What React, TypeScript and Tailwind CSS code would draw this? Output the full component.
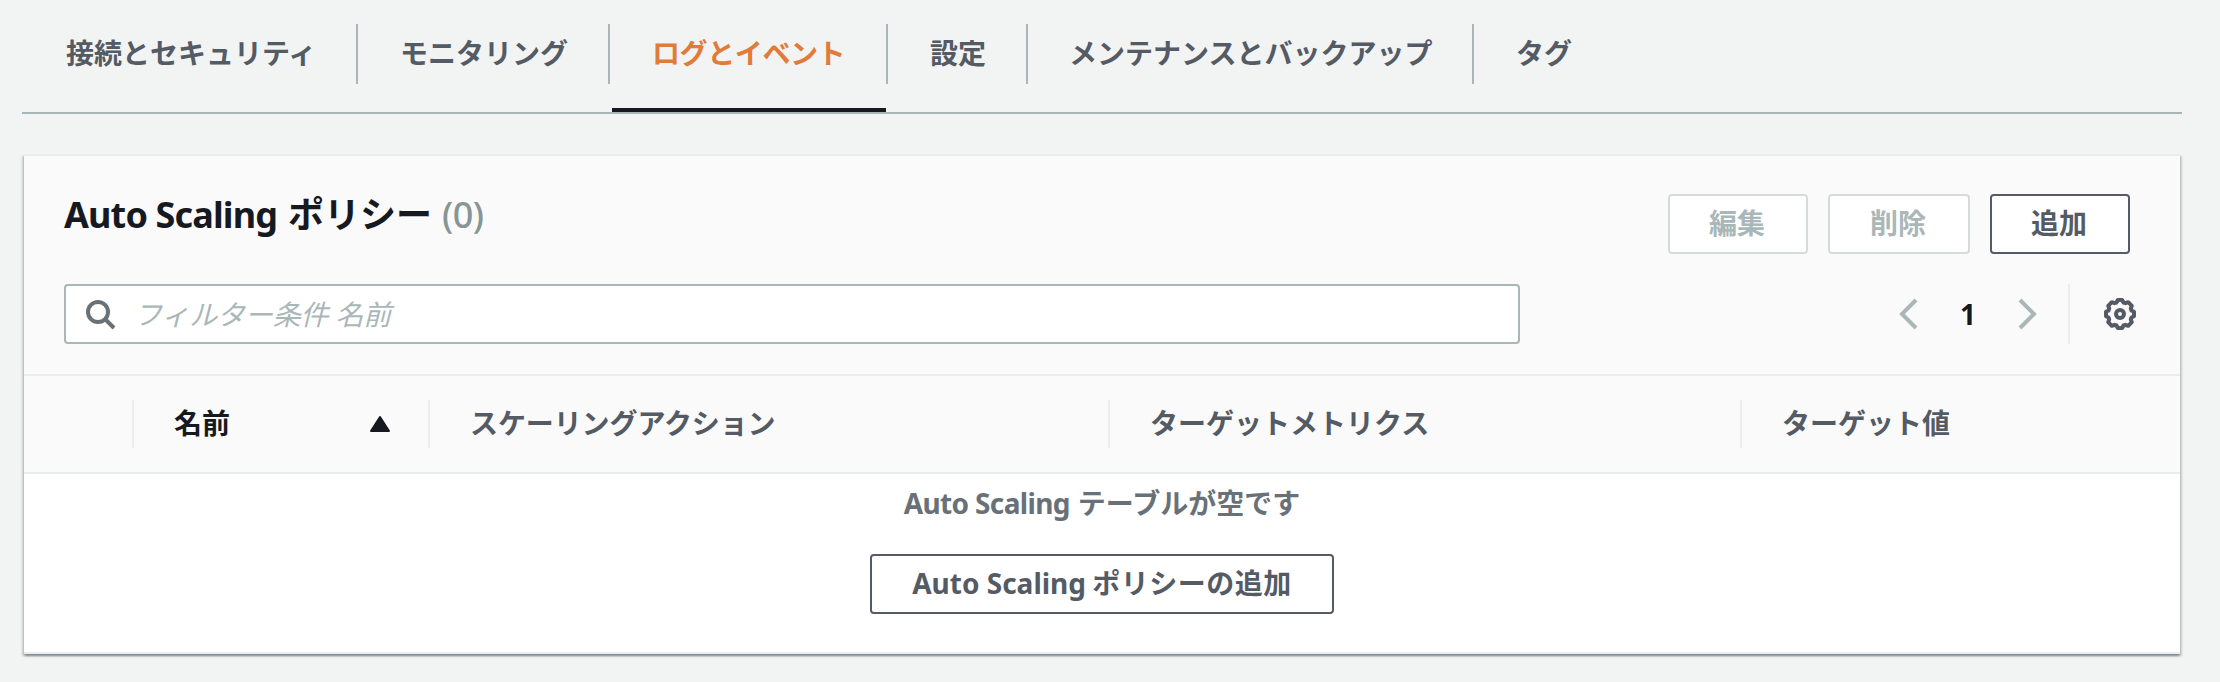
const tabs = [
  { label: "接続とセキュリティ", width: "w-[334px]", tracking: "pl-[42px]" },
  { label: "モニタリング", width: "w-[252px]", tracking: "pl-[42px]" },
  { label: "ログとイベント", width: "w-[278px]", tracking: "pl-[42px] tracking-[-0.4px]", active: true },
  { label: "設定", width: "w-[140px]", tracking: "pl-[42px]" },
  { label: "メンテナンスとバックアップ", width: "w-[446px]", tracking: "pl-[41px]" },
  { label: "タグ", width: "w-[140px]", tracking: "pl-[42px]", last: true },
];

function Tabs() {
  return (
    <nav className="ml-[22px] mr-[38px] flex h-[114px] border-b-2 border-[#aab7b8] pt-6 pl-[2px] font-bold text-[#545b64]">
      {tabs.map((t) => (
        <div key={t.label} className={`flex h-full flex-none flex-col ${t.width}`}>
          <div
            className={`flex h-[60px] items-center whitespace-nowrap ${t.tracking} ${
              t.last ? "" : "border-r-2 border-[#aab7b8]"
            } ${t.active ? "text-[#e07b39]" : ""}`}
          >
            <span className="pb-[2px]">{t.label}</span>
          </div>
          {t.active && <div className="mt-6 mr-[2px] ml-[2px] h-1 bg-[#16191f]" />}
        </div>
      ))}
    </nav>
  );
}

function Button({ children, className }: { children: React.ReactNode; className: string }) {
  return (
    <button
      className={`flex h-[60px] items-center justify-center rounded-[4px] border-2 bg-white pb-[2px] font-bold whitespace-nowrap ${className}`}
    >
      {children}
    </button>
  );
}

function SearchIcon() {
  return (
    <svg width="32" height="32" viewBox="0 0 32 32" fill="none" stroke="#687078" strokeWidth="4">
      <circle cx="14" cy="14" r="10" />
      <path d="M21 21l9 9" />
    </svg>
  );
}

function Chevron({ flip }: { flip?: boolean }) {
  return (
    <svg width="20" height="32" viewBox="0 0 20 32" fill="none" stroke="#aab7b8" strokeWidth="4" className={flip ? "-scale-x-100" : ""}>
      <path d="M18 2L4 16L18 30" />
    </svg>
  );
}

function Gear() {
  return (
    <svg width="32" height="32" viewBox="-16 -16 32 32" fill="none" stroke="#545b64" strokeWidth="4" strokeLinejoin="round">
      <path d="M-2.200-14L2.200-14 3.500-11.500 5.500-10.800 8.200-11.800 11.800-8.200 10.800-5.500 11.500-3.500 14-2.200 14 2.200 11.500 3.500 10.800 5.500 11.800 8.200 8.200 11.800 5.500 10.800 3.500 11.500 2.200 14-2.200 14-3.500 11.500-5.500 10.800-8.200 11.800-11.800 8.200-10.800 5.500-11.500 3.500-14 2.200-14-2.200-11.500-3.500-10.800-5.500-11.800-8.200-8.200-11.800-5.500-10.800-3.500-11.500z" />
      <circle r="4" />
    </svg>
  );
}

function Th({ children, className }: { children?: React.ReactNode; className: string }) {
  return <div className={`flex h-12 flex-none items-center pb-[2px] ${className}`}>{children}</div>;
}

const divider = "border-r-2 border-[#eaeded]";

export default function App() {
  return (
    <div className="h-[682px] w-[2220px] overflow-hidden bg-[#f2f3f3] font-['Noto_Sans','Noto_Sans_CJK_JP',sans-serif] text-[28px] leading-[44px] text-[#545b64]">
      <Tabs />
      <section className="mt-10 ml-6 h-[500px] w-[2156px] border-y-2 border-[#eaeded] bg-white shadow-[0_2px_2px_0_rgba(0,28,36,0.3),2px_2px_2px_0_rgba(0,28,36,0.15),-2px_2px_2px_0_rgba(0,28,36,0.15)]">
        <header className="h-[220px] border-b-2 border-[#eaeded] bg-[#fafafa] pt-[38px] pl-10">
          <div className="flex justify-between pr-[50px]">
            <h1 className="flex h-[42px] items-center text-[36px] font-bold whitespace-nowrap text-[#16191f]">
              <span className="w-[224px] tracking-[-0.85px]">Auto Scaling</span>
              <span className="w-[154px]">ポリシー</span>
              <span className="font-medium tracking-[-0.5px] text-[#879596]">(0)</span>
            </h1>
            <div className="flex gap-5">
              <Button className="w-[140px] border-[#d5dbdb] pr-[2px] text-[#aab7b8]">編集</Button>
              <Button className="w-[142px] border-[#d5dbdb] pr-[2px] text-[#aab7b8]">削除</Button>
              <Button className="w-[140px] border-[#545b64] pr-[2px] text-[#545b64]">追加</Button>
            </div>
          </div>
          <div className="mt-[30px] flex h-[60px] items-center">
            <div className="flex h-[60px] w-[1456px] flex-none items-center rounded-[4px] border-2 border-[#aab7b8] bg-white pl-[18px]">
              <SearchIcon />
              <span className="ml-[18px] tracking-[-0.15px] text-[#aab7b8] italic">フィルター条件 名前</span>
            </div>
            <div className="ml-[378px] flex-none">
              <Chevron />
            </div>
            <span className="w-[100px] text-center font-bold text-[#16191f]">1</span>
            <Chevron flip />
            <div className="ml-[30px] h-[60px] w-[2px] bg-[#eaeded]" />
            <div className="ml-[34px]">
              <Gear />
            </div>
          </div>
        </header>
        <div className="flex h-[98px] items-center border-b-2 border-[#eaeded] bg-[#fafafa] font-bold whitespace-nowrap">
          <Th className={`w-[110px] ${divider}`} />
          <Th className={`w-[296px] justify-between pr-[38px] pl-10 text-[#16191f] ${divider}`}>
            名前
            <svg width="20" height="16" viewBox="0 0 20 16" fill="#16191f" stroke="#16191f" strokeWidth="2" strokeLinejoin="round" className="mt-[2px]">
              <path d="M10 1L19 15H1z" />
            </svg>
          </Th>
          <Th className={`w-[680px] pl-10 tracking-[-0.1px] ${divider}`}>スケーリングアクション</Th>
          <Th className={`w-[632px] pl-10 ${divider}`}>ターゲットメトリクス</Th>
          <Th className="pl-10">ターゲット値</Th>
        </div>
        <div className="flex flex-col items-center pt-[7px] font-bold">
          <p className="flex whitespace-nowrap text-[#687078]">
            <span className="w-[174px] tracking-[-0.65px]">Auto Scaling</span>
            <span>テーブルが空です</span>
          </p>
          <Button className="mt-[29px] w-[464px] border-[#545b64]">
            <span className="w-[180px] text-left">Auto Scaling</span>
            <span className="tracking-[0.5px]">ポリシーの追加</span>
          </Button>
        </div>
      </section>
    </div>
  );
}
